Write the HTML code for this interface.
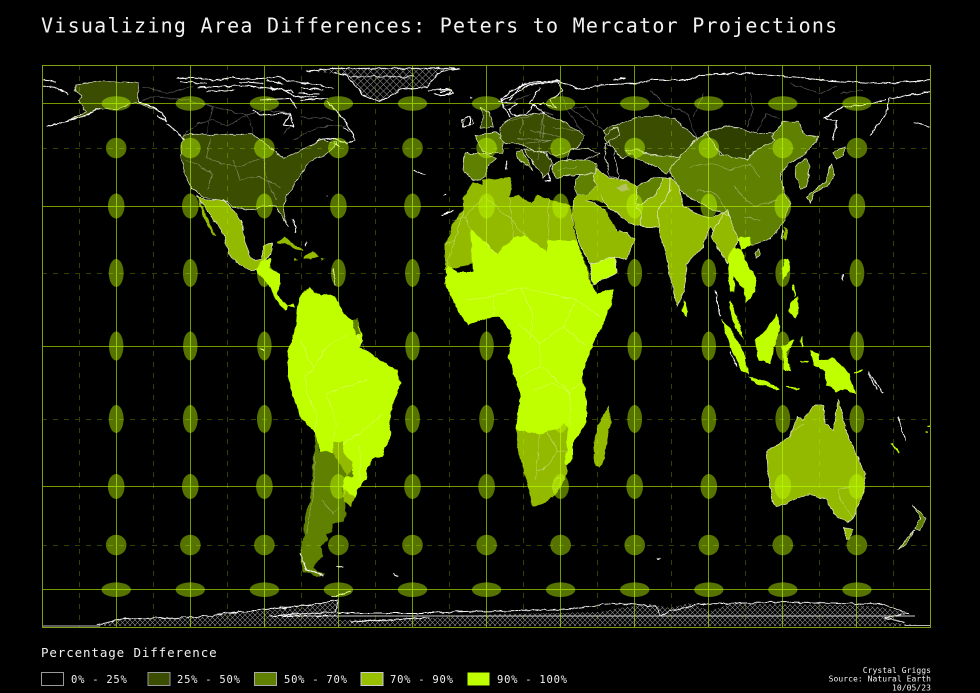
<!DOCTYPE html>
<html><head><meta charset="utf-8"><style>
html,body{margin:0;padding:0;background:#000}
body{width:980px;height:693px;overflow:hidden;position:relative}
svg{position:absolute;left:0;top:0}
text{font-family:"DejaVu Sans Mono","Liberation Mono",monospace;fill:#f2f2f2}
.c1{fill:#3a4d00}.c2{fill:#5f8000}.c3{fill:#94ba00}.c4{fill:#bfff00}
.b{fill:none;stroke:#e8eedd;stroke-width:2;stroke-linejoin:round}
.w{fill:none;stroke:#fff;stroke-width:3;stroke-linejoin:round}
.t{fill:none;stroke:#fff;stroke-opacity:.36;stroke-width:2}
.s{stroke:#e4ecd0;stroke-width:2;stroke-linejoin:round}
</style></head><body>
<svg width="980" height="693" viewBox="0 0 980 693" xmlns="http://www.w3.org/2000/svg">
<defs>
<pattern id="h" patternUnits="userSpaceOnUse" width="5" height="5"><path d="M0 0L5 5M5 0L0 5" stroke="#8c8c8c" stroke-width=".6" fill="none"/></pattern>
<pattern id="g" patternUnits="userSpaceOnUse" width="6.5" height="6.5"><path d="M0 0L6.5 6.5M6.5 0L0 6.5" stroke="#8c8c8c" stroke-width=".6" fill="none"/></pattern>
<filter id="r" filterUnits="userSpaceOnUse" x="0" y="0" width="980" height="693" color-interpolation-filters="sRGB">
<feTurbulence type="fractalNoise" baseFrequency=".13" numOctaves="3" seed="4" result="n"/>
<feDisplacementMap in="SourceGraphic" in2="n" scale="4" xChannelSelector="R" yChannelSelector="G"/>
</filter>
<g id="col">
<ellipse cy="103.5" rx="14.7" ry="7.3"/><ellipse cy="148" rx="10.3" ry="10.3"/><ellipse cy="206" rx="8.3" ry="12.5"/><ellipse cy="273" rx="7.4" ry="14"/><ellipse cy="346" rx="7.2" ry="14.5"/><ellipse cy="419" rx="7.4" ry="14"/><ellipse cy="486.5" rx="8.3" ry="12.5"/><ellipse cy="545" rx="10.3" ry="10.3"/><ellipse cy="589.7" rx="14.7" ry="7.3"/>
</g>
</defs>
<rect width="980" height="693" fill="#000"/>

<!-- hatch -->
<g transform="scale(.33333)"><polygon fill="url(#g)" transform="scale(3)" points="307,71 333,68 460,68 440,72 427,87 400,90 380,102 363,95 353,83 347,75"/></g>
<polygon fill="url(#h)" points="96,626 125,619 200,617 240,612 300,608 338,600 338,620 430,618 500,614 600,612 620,608 650,604 670,608 690,603 710,611 730,604 850,605 880,607 908,613 885,622 930,626"/>

<g filter="url(#r)">
<!-- North America -->
<g transform="scale(.33333)">
<polygon class="c1 s" points="552,404 756,404 790,425 850,475 870,465 910,448 950,430 960,415 980,425 1010,425 1000,445 970,470 940,475 905,515 890,545 860,590 850,620 855,660 865,680 845,650 830,620 790,615 765,630 735,630 700,620 680,605 610,590 575,565 555,520 540,470 545,430"/>
<polygon class="c1 s" points="228,255 300,242 415,248 415,305 460,320 490,345 480,335 420,310 390,310 350,330 320,325 290,330 260,345 200,365 260,335 235,305 245,290 225,270"/>
<path class="w" d="M140 378L200 365L260 345L300 325M128 240L170 245M128 258L165 262L205 285M415 305L450 315L490 345L500 365L470 345M500 370L530 395L552 420M530 235L580 232L640 240L700 232L760 238L830 230L860 240L990 262L1000 268M540 245L620 250M590 262L680 258L770 260L850 270L890 290L950 290M620 275L700 270M780 300L870 295L890 325M720 245L790 250M800 240L850 255M810 262L880 275M900 262L970 270M895 280L960 282M900 300L985 295M980 305L1015 340L1045 375L1065 420L1040 430L1000 415L960 420L950 430M1000 430L1020 440M870 340L880 380M1285 270L1350 268L1360 280L1300 285M760 330L780 345L870 340L850 375L880 380M1030 380L1048 395"/>
<path class="t" d="M415 305L460 290L560 300L640 320L740 345L800 330L870 340M552 404L590 370L640 360L680 380L740 345M740 345L760 400M850 400L870 380M630 410L620 470L660 490L720 500L790 470M560 480L640 520L620 570M700 480L720 540L780 530L840 560M790 470L800 540L830 600M430 260L500 280L580 260M640 320L620 400M880 420L960 380L1040 375M900 350L1000 360"/>
<polygon class="c1 s" points="1440,320 1470,335 1480,380 1440,385 1450,350"/>
<polygon fill="none" class="s" points="1390,365 1410,350 1420,370 1395,380"/>
<path class="w" d="M920,213L1000,205L1380,205L1320,215L1280,260L1200,270L1140,305L1090,285L1060,250L1040,225L1000,218"/>
<path d="M1050 230H1240" stroke="#ccc" stroke-width="3" fill="none"/>
<path class="w" d="M1240 512L1275 522M1330 640L1360 632M1330 585h6M1410 295h8"/>
</g>

<!-- Central America -->
<g transform="translate(190 190) scale(.33333)">
<polygon class="c3 s" points="20,15 50,30 100,30 130,60 155,95 165,155 180,200 195,208 215,205 220,170 245,160 240,200 215,215 200,240 185,242 150,225 115,190 100,130 60,75 30,30"/>
<polygon class="c3" points="25,20 50,80 80,140 70,135 45,90 30,50"/>
<polygon class="c4" points="200,240 215,212 245,205 240,235 270,250 270,285 260,310 290,345 310,340 315,355 295,345 285,360 255,325 240,290 205,250"/>
<polygon class="c3" points="262,155 285,140 310,160 340,182 315,178 290,160 265,158"/>
<polygon class="c3" points="350,195 370,183 385,200 360,208 340,205"/>
<polygon class="c3" points="312,205 325,210 315,213"/>
<polygon class="c3" points="390,205 405,208 395,212"/>
<path class="w" d="M305 90L320 110L315 130M350 155L345 170M430 235L435 285M410 20h4"/>
</g>

<!-- South America -->
<polygon class="c4" points="296.7,310 300,295 310,288 315,293 327,295 335,297 342,310 348,318 358,322 363,340 360,347 370,352 380,360 397,370 401,383 393,403 391,413 390,437 383,455 373,460 366,470 367,480 358,488 355,497 350,505 343,497 343,488 333,470 320,452 315,433 300,417 287,377 287,368 288,350 295,330"/>
<g transform="translate(200 280) scale(.33333)">
<polygon class="c2" points="345,460 358,515 400,518 425,535 455,570 460,590 435,590 425,630 440,700 430,725 400,730 395,755 380,765 385,775 360,800 370,830 340,860 350,875 375,885 350,890 310,875 300,830 310,770 315,710 335,640 340,530 345,490"/>
<polygon class="c3" points="400,515 400,485 428,482 430,520 455,545 460,565 440,590 430,570 400,520"/>
<polygon class="c3" points="430,625 465,650 455,680 430,665"/>
<polygon class="c2" points="458,118 472,115 480,165 466,165"/>
<path class="t" d="M345 460L350 400L320 340L315 290L340 265L310 205L300 185M340 265L380 200L440 165M380 340L440 320L500 300M380 345L410 430L400 485M430 490L480 460L550 400M500 215L470 165M345 520L340 640L320 760M365 660L400 700L420 680M480 500L480 620"/>
<path class="w" d="M300 820L320 870L370 888M410 860L430 858M580 880L595 888M180 205L195 210M395 950L455 935"/>
</g>

<!-- Africa -->
<polygon class="c3" points="445,245 453,223 463,210 463,198 473,182 482,185 482,180 495,179 510,177 512,188 510,198 518,195 532,203 537,195 550,200 560,202 570,205 572,217 578,245 445,270"/>
<polygon class="c4" points="447,265 457,272 473,272 470,228 497,254 513,237 525,236 547,251 548,241 577,241 587,267 592,285 597,294 613,288 613,297 610,307 597,337 587,358 582,377 587,400 587,420 573,443 573,460 565,467 516,430 520,393 508,357 512,337 508,327 500,317 487,318 468,325 457,310 445,283"/>
<g transform="translate(200 280) scale(.33333)">
<polygon class="c3" points="948,450 1020,460 1040,455 1075,445 1092,430 1105,445 1100,510 1095,545 1100,570 1095,600 1070,640 1040,665 1000,680 990,650 980,600 960,530"/>
<polygon class="c3" points="1225,378 1232,425 1212,535 1198,562 1185,555 1180,515 1190,445"/>
<path class="t" d="M1020 460L1010 560L1005 600M1010 570L1030 570L1075 515L1100 510M1075 515L1040 455M1060 610a10 15 20 1 0 20 0a10 15 20 1 0 -20 0M1000 330L1060 310L1110 340L1110 440M960 290L1020 260L1020 190L1090 140L1160 200M1090 140L1130 60L1200 110M1030 260L1110 340M1150 300L1110 340M880 110L880 50L960 20L1040 40L1130 60M800 60L880 50M960 20L1000 100L990 180M960 130L1020 190"/>
</g>
<g transform="translate(430 130) scale(.33333)">
<polygon class="c2 s" points="105,70 165,70 200,85 170,110 165,140 150,150 130,150 100,125"/>
<polygon class="c2 s" points="135,15 200,5 225,25 220,55 215,70 175,70 160,65 150,50"/>
<polygon class="c2 s" points="260,65 275,60 310,120 285,100 262,85"/>
<polygon class="c2 s" points="370,105 400,88 470,90 500,100 495,130 450,135 420,135 380,145 365,125"/>
<polygon class="c2 s" points="437,150 450,135 500,130 505,165 470,195 440,195 435,170"/>
<polygon class="c3 s" points="430,205 460,205 530,240 560,300 590,310 612,330 590,390 555,380 480,405 450,345 425,260"/>
<polygon class="c3 s" points="500,115 540,145 590,150 620,170 640,240 640,290 600,280 580,265 535,235 520,210 490,140"/>
<polygon class="c4 s" points="485,405 555,378 560,430 490,465 480,430"/>
<polygon class="c3" points="440,195 470,195 505,165 520,215 470,210 430,205"/>
<path class="t" d="M155 205L105 260L120 295M165 200L245 270L250 320M245 270L240 200M355 210L355 333M285 318L245 270M65 270L105 260M75 330L45 345M100 240L75 330L50 405M200 372L165 340"/>
<path class="w" d="M35 258L70 240M45 195h3M500 110h2M340 110L365 150M345 150h20M230 90v30"/>
<polygon fill="#000" points="425,250 445,335 470,410 485,465 465,400 440,330"/>
</g>

<!-- Eurasia -->
<g transform="translate(490 50) scale(.33333)">
<polygon class="c1 s" points="30,235 60,205 110,195 160,190 220,215 285,255 260,295 240,300 200,320 170,305 135,310 90,280 50,280 30,265"/>
<polygon class="c1 s" points="100,300 170,310 190,340 160,385 140,350"/>
<polygon class="c1 s" points="340,240 430,205 500,197 550,205 620,265 600,290 570,320 510,318 470,310 440,300 400,325 370,300"/>
<polygon fill="#2f3f00" class="s" points="650,245 720,228 800,250 850,250 855,270 800,300 770,328 700,318 670,285"/>
<polygon class="c2 s" points="540,345 600,290 630,260 650,245 690,315 770,328 800,300 855,270 845,260 880,215 925,215 945,255 985,262 960,300 930,320 900,340 870,370 880,420 900,460 880,520 840,565 790,585 745,570 720,500 700,490 650,470 590,440 560,400 540,370"/>
<polygon class="c2 s" points="405,300 440,300 480,315 570,320 530,370 490,345 470,340 440,325"/>
<polygon class="c2 s" points="440,410 500,380 520,385 500,430 470,470 440,460"/>
<polygon class="c3 s" points="440,470 500,430 520,385 540,385 540,420 505,480 510,530 450,530 455,490"/>
<polygon class="c3 s" points="540,385 570,410 580,470 640,500 665,505 715,480 720,520 690,570 660,530 640,590 590,640 585,720 561,771 550,720 525,610 505,540 505,480 540,420"/>
<polygon class="c3 s" points="700,490 720,500 745,570 735,590 710,640 690,600 660,560"/>
<polygon class="c2 s" points="915,350 950,325 960,350 950,410 930,415 920,380"/>
<polygon class="c2 s" points="950,440 1005,395 1025,340 1035,375 1020,400 970,430 960,460"/>
<polygon class="c2 s" points="1030,310 1065,290 1060,315 1040,325"/>
<polygon fill="#c8c8a8" fill-opacity=".6" points="380,410 410,402 420,420 395,425"/>
<path class="w" d="M30 150L60 125L110 100L200 92L280 120L330 105L440 100L490 90L600 90L630 75L800 70L940 85L1000 92L1180 100L1320 92M370 88L410 82M1320 125L1200 145M1000 205L1060 170L1120 165L1190 150M1000 205L1040 210L1030 270M1140 255L1190 190L1200 145M1270 218L1320 230"/>
<path class="t" d="M210 100L230 180L285 255M340 240L280 200L240 175L290 170L320 210M480 120L520 160L590 190L620 265M640 130L610 200M780 130L790 180L770 230M900 100L990 130L1040 110M1120 120L1050 130M870 210L830 190L800 250M600 350L660 340L720 360L780 340L810 380M620 420L680 430L720 500M730 410L790 470L860 450M760 500L810 510M200 360L260 350M120 240L210 260M80 265L180 270M160 190L150 260M40 170L120 130"/>
<path class="w" d="M30 150L60 200M100 100L60 150M150 110L120 160L165 190"/>
<polygon fill="#000" class="s" points="345,280 370,290 385,385 360,380 350,340"/>
<polygon fill="#000" class="s" points="240,300 285,295 330,310 280,330 230,330"/>
<polygon fill="#000" points="345,470 395,510 420,520 385,545 360,510"/>
<polygon class="c3" points="885,530 892,540 888,572 880,565"/>
</g>

<!-- Europe detail -->
<g transform="translate(440 60) scale(.33333)">
<path class="w" d="M175 125L230 100L260 75L350 65L370 90L330 120L350 145L310 130L280 135L260 160L230 170L205 150L230 130L180 125M0 95L35 90L25 100L0 105M65 180L90 170L90 195L70 200Z"/>
<path class="t" d="M190 185L250 175L310 155L340 165M250 175L240 225M310 155L310 235M340 200L420 215M255 250L340 240M300 240L295 300"/>
<polygon class="c1 s" points="490,230 530,200 540,225 500,250"/>
</g>

<!-- SE Asia -->
<g transform="translate(700 220) scale(.33333)">
<polygon class="c4" points="115,55 150,50 155,75 125,90 140,130 170,175 165,215 140,250 135,225 130,205 100,170 105,215 90,215 82,110 100,85 125,90"/>
<polygon class="c4" points="90,240 110,290 132,360 105,320 88,260"/>
<polygon class="c4" points="65,298 95,330 130,395 145,465 125,450 90,380"/>
<polygon class="c4" points="145,468 200,485 240,505 230,508 170,492"/>
<polygon class="c4" points="230,280 240,315 232,350 210,430 175,420 165,360 205,320"/>
<polygon class="c4" points="245,380 285,358 270,385 260,400 275,455 250,450 250,405"/>
<polygon class="c4" points="255,115 265,115 270,150 250,180 245,150"/>
<polygon class="c4" points="270,250 295,230 295,280 285,295 265,270"/>
<polygon class="c4" points="330,390 355,400 360,420 400,415 440,450 470,525 440,510 410,515 380,495 375,455 340,435"/>
<polygon class="c2 s" points="165,100 175,85 180,105 170,115"/>
<path fill="none" stroke="#bfff00" stroke-width="5" d="M280 195L285 230M300 425h25M460 460L490 450M305 350v30M260 500L300 505"/>
<path class="w" d="M45 210L60 290M90 395L110 440M505 460L530 510M430 180v-15M250 30L245 60"/>
</g>

<!-- Oceania -->
<g transform="translate(650 280) scale(.33333)">
<polygon class="c4" points="100,58 115,90 108,112 98,90"/>
<polygon class="c3 s" points="350,515 420,470 440,410 460,420 490,375 520,375 525,430 550,450 565,355 590,460 620,520 645,580 640,640 610,715 590,725 550,700 530,660 500,650 480,640 430,660 380,680 365,660 355,590"/>
<polygon class="c3 s" points="583,745 608,748 600,778 590,778"/>
<polygon class="c2 s" points="790,678 830,715 810,750 795,745 810,715"/>
<polygon class="c2 s" points="795,750 770,790 745,810 770,775"/>
<path class="t" d="M565 630L600 620M565 630L570 660L610 715M430 450L465 430"/>
<path stroke="#bfff00" stroke-width="5" fill="none" d="M725 490L745 520M825 455h5M830 440h8"/>
<path class="w" d="M655 275L700 340M745 410L765 480M20 835h10"/>
</g>

<!-- Antarctica -->
<path fill="none" stroke="#f4f4f4" stroke-width=".9" d="M96 625L110 622L125 619L200 617L240 612L300 606L338 600L336 612L280 615M338 613L430 613L500 611L570 609L615 603L656 606L660 616L670 611L700 604L790 602L880 604L908 613L885 618L905 622M270 616H335M350 622L430 618"/>
</g>
<path d="M290 616H915" stroke="#cfcfcf" stroke-width=".9"/>
<path d="M42 626H100M905 625.5H930" stroke="#bbb" stroke-width="1"/>

<!-- ellipses -->
<g fill="#bfff00" fill-opacity=".45">
<use href="#col" x="116.2"/><use href="#col" x="190.3"/><use href="#col" x="264.4"/><use href="#col" x="338.4"/><use href="#col" x="412.5"/><use href="#col" x="486.6"/><use href="#col" x="560.6"/><use href="#col" x="634.7"/><use href="#col" x="708.8"/><use href="#col" x="782.8"/><use href="#col" x="856.9"/>
</g>

<!-- grid -->
<path fill="none" stroke="#bfff00" stroke-opacity=".26" stroke-width="1" stroke-dasharray="5 6" d="M42 148.5H931M42 273.5H931M42 419.5H931M42 545.5H931M79.5 65V627M153.5 65V627M227.5 65V627M301.5 65V627M375.5 65V627M449.5 65V627M523.5 65V627M597.5 65V627M671.5 65V627M745.5 65V627M819.5 65V627M893.5 65V627"/>
<path fill="none" stroke="#bfff00" stroke-opacity=".6" stroke-width="1" d="M42 103.5H931M42 206.5H931M42 346.5H931M42 486.5H931M42 589.5H931M116.5 65V627M190.5 65V627M264.5 65V627M338.5 65V627M412.5 65V627M486.5 65V627M560.5 65V627M634.5 65V627M708.5 65V627M782.5 65V627M856.5 65V627"/>
<rect x="42.5" y="65.5" width="888" height="562" fill="none" stroke="#80a010" stroke-width="1"/>

<!-- text -->
<text x="41" y="32.5" font-size="20" letter-spacing="1.25">Visualizing Area Differences: Peters to Mercator Projections</text>
<text x="41" y="657" font-size="12.5" letter-spacing=".88">Percentage Difference</text>
<g stroke-width="1">
<rect x="41.5" y="672.5" width="22" height="13" fill="#000" stroke="#999"/>
<rect x="148" y="672.5" width="22" height="13" fill="#3a4d00" stroke="#999"/>
<rect x="254.5" y="672.5" width="22" height="13" fill="#5f8000" stroke="#aaa"/>
<rect x="361" y="672.5" width="22" height="13" fill="#98bf00" stroke="#ccc"/>
<rect x="467.5" y="672.5" width="22" height="13" fill="#bfff00"/>
</g>
<g font-size="10.5" letter-spacing=".75">
<text x="71" y="683">0% - 25%</text>
<text x="177" y="683">25% - 50%</text>
<text x="284" y="683">50% - 70%</text>
<text x="390" y="683">70% - 90%</text>
<text x="497" y="683">90% - 100%</text>
</g>
<g font-size="8" text-anchor="end" letter-spacing=".06">
<text x="931" y="673">Crystal Griggs</text>
<text x="931" y="681.7">Source: Natural Earth</text>
<text x="931" y="690.3">10/05/23</text>
</g>
</svg>
</body></html>
